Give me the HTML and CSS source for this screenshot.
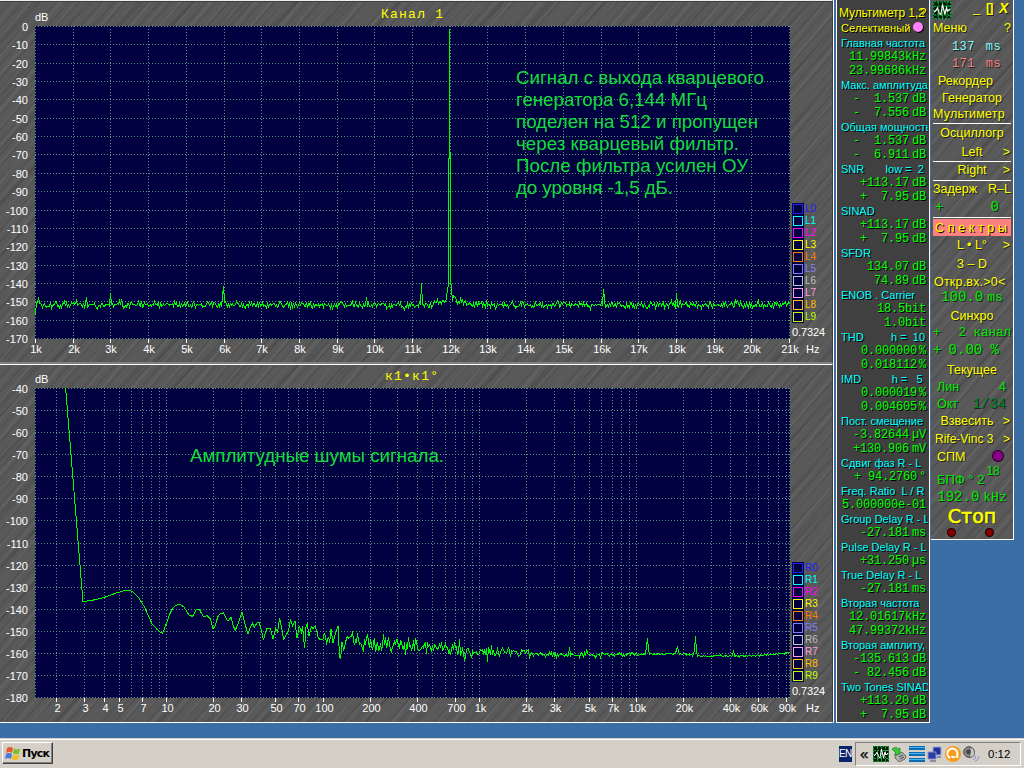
FILE: index.html
```html
<!DOCTYPE html>
<html lang="ru">
<head>
	<meta charset="UTF-8">
	<title>Анализатор спектра</title>
	<link rel="stylesheet" href="styles.css">
</head>
<body>
	<div id="desk">
		<div id="charts">
			<div class="chart metal first">
				<svg id="plot1" class="plot" width="790" height="362"></svg>
				<div class="side">
					<ul class="legend" id="leg1"></ul>
					<p class="res">0.7324</p>
					<p class="hz">Hz</p>
				</div>
			</div>
			<div class="chart metal second">
				<svg id="plot2" class="plot" width="790" height="357"></svg>
				<div class="side">
					<ul class="legend" id="leg2"></ul>
					<p class="res">0.7324</p>
					<p class="hz">Hz</p>
				</div>
			</div>
		</div>
		<div id="meter">
			<h2>Мультиметр 1,2<span>?</span></h2>
			<h3>Селективный<i class="lamp"></i></h3>
			<div id="rows"></div>
		</div>
		<div id="menu" class="metal">
			<div class="top">
				<svg class="logo" width="18" height="18" viewBox="0 0 16 16"><use href="#wave"/></svg>
				<span class="btns"><b class="min">_</b><b class="max">[]</b><b class="close">X</b></span>
			</div>
			<div class="r h20"><span>Меню</span><span>?</span></div>
			<div class="r m cyan h17"><span>137</span><span>ms</span></div>
			<div class="r m pink h17"><span>171</span><span>ms</span></div>
			<div class="r c h17 in"><span>Рекордер</span></div>
			<div class="r c h17"><span>Генератор</span></div>
			<div class="r h17 line wide"><span>Мультиметр</span></div>
			<div class="r c h20"><span>Осциллогр</span></div>
			<div class="r h18 line arrow"><span>Left</span><em>&gt;</em></div>
			<div class="r h19 line arrow"><span>Right</span><em>&gt;</em></div>
			<div class="r h18"><span>Задерж</span><span>R–L</span></div>
			<div class="r g mono h19 line zero"><span>+</span><span>0</span></div>
			<div class="r hot"><span>С</span><span>п</span><span>е</span><span>к</span><span>т</span><span>р</span><span>ы</span></div>
			<div class="r h20 arrow"><span>L • L°</span><em>&gt;</em></div>
			<div class="r c h18"><span>3 – D</span></div>
			<div class="r h17 tight"><span>Откр.вх.&gt;0&lt;</span></div>
			<div class="r g mono c h15"><span>100.0<small>ms</small></span></div>
			<div class="r c h22"><span>Синхро</span></div>
			<div class="r g mono h12 chan"><span>+</span><span>2 канал</span></div>
			<div class="r g mono h22 perc"><span>+</span><span>0.00 %</span></div>
			<div class="r c h17"><span>Текущее</span></div>
			<div class="r g h17 pad"><span>Лин</span><span>4</span></div>
			<div class="r g h17 pad"><span>Окт</span><span class="dark">1/34</span></div>
			<div class="r h18 arrow in"><span>Взвесить</span><em>&gt;</em></div>
			<div class="r h17 arrow left"><span>Rife-Vinc 3</span><em>&gt;</em></div>
			<div class="r h20 pad"><span>СПМ</span><i class="lamp violet"></i></div>
			<div class="r g h25 pad bpf"><span>БПФ ° 2<sup>18</sup></span></div>
			<div class="r g mono c h11 rate"><span>192.0<small>kHz</small></span></div>
			<div class="r stop"><span>Стоп</span></div>
			<div class="leds"><i></i><i></i></div>
		</div>
	</div>
	<div id="taskbar">
		<div class="start">
			<svg width="16" height="16" viewBox="0 0 16 16">
				<path d="M2 3Q5 1 8 3L7 8Q4 6 1 8Z" fill="#e8582c"/>
				<path d="M9 3.500Q12 5 15 3.500L14 8.500Q11 10 8 8.500Z" fill="#7cbf2c"/>
				<path d="M1 9Q4 7 7 9L6 14Q3 12 0 14Z" fill="#4878dc"/>
				<path d="M8 9.500Q11 11 14 9.500L13 14.500Q10 16 7 14.500Z" fill="#f0c020"/>
			</svg>
			<b>Пуск</b>
		</div>
		<div class="lang"><span>EN</span></div>
		<div class="tray">
			<span class="more">«</span>
			<svg width="16" height="16" viewBox="0 0 16 16">
				<g id="wave">
					<path d="M0 0H16V16H0Z" fill="#001800"/>
					<path d="M.5.500H15.500V15.500H.500ZM4.500 1V15M8.500 1V15M12.500 1V15M1 4.500H15M1 8.500H15M1 12.500H15" fill="none" stroke="#18a040" stroke-dasharray="2 1"/>
					<path d="M1 10L3 8L4 6L5.500 11L7 12L8.500 3L10.500 12L12 6L13 9L15 7" fill="none" stroke="#fff"/>
				</g>
			</svg>
			<svg width="16" height="16" viewBox="0 0 16 16">
				<path d="M4 10L11 6L15 10L14 13L8 16L4 12Z" fill="#b0b4b0" stroke="#555" stroke-width=".800"/>
				<path d="M8 11L12 9M9 13L13 11" stroke="#444"/>
				<path d="M1 3L5 1L7 3L9 2L9 8L3 9L5 7Z" fill="#38c838" stroke="#188018" stroke-width=".700"/>
			</svg>
			<svg width="16" height="16" viewBox="0 0 16 16">
				<path d="M0 0H16V4H0ZM0 6H16V10H0ZM0 12H16V16H0Z" fill="#0c6cb8"/>
				<path d="M0 1.500H16M0 7.500H16M0 13.500H16" stroke="#48b4f0"/>
			</svg>
			<svg width="16" height="16" viewBox="0 0 16 16">
				<path d="M6 1H14V9H6Z" fill="#20309c" stroke="#a0a8d0"/>
				<path d="M1 6H9V13H1Z" fill="#2c3ca8" stroke="#8890c0"/>
				<path d="M3 15H9M10 11H14" stroke="#707898" stroke-width="1.500"/>
			</svg>
			<svg width="16" height="16" viewBox="0 0 16 16">
				<circle cx="8" cy="8" r="8" fill="#f89c1c"/>
				<path d="M5 12A5 5 0 1 1 12.300 8.500V12" fill="none" stroke="#fff" stroke-width="2"/>
				<path d="M10.500 10.500A2.500 2.500 0 0 1 6.500 10" fill="none" stroke="#fff" stroke-width="1.800"/>
			</svg>
			<svg width="17" height="16" viewBox="0 0 17 16">
				<circle cx="6" cy="6" r="5.300" fill="#8c8c8c" stroke="#444"/>
				<path d="M7 1Q13 3 11 10L7 12Z" fill="#c8c8c8" stroke="#555" stroke-width=".700"/>
				<circle cx="5.500" cy="6" r="2.400" fill="#444"/>
				<path d="M10 14Q13 13 13 10M12 15.500Q16 14 16 10" fill="none" stroke="#8890d8"/>
			</svg>
			<span class="clock">0:12</span>
		</div>
	</div>
	<script src="script.js"></script>
</body>
</html>
```

FILE: styles.css
```css
*,*:before{box-sizing:border-box;}
body,ul,p,h2,h3{padding:0;margin:0;}
li{list-style:none;}
body{width:1024px;height:768px;overflow:hidden;background:#3a6ea5;font-family:"Liberation Sans",Arial,sans-serif;font-size:11px;display:flex;flex-direction:column;}
#desk{height:738px;display:flex;align-items:flex-start;}
.metal{background:
	repeating-linear-gradient(132deg,rgba(0,0,0,.1) 0 1px,transparent 2px 7px,rgba(0,0,0,.07) 8px 9px,transparent 10px 17px),
	repeating-linear-gradient(130deg,rgba(255,255,255,.05) 0 2px,transparent 3px 11px,rgba(255,255,255,.04) 12px 13px,transparent 14px 23px),
	repeating-linear-gradient(134deg,transparent 0 26px,rgba(0,0,0,.08) 28px 30px,transparent 31px 37px),#595959;}

#charts{width:834px;height:723px;border-right:1px solid #fff;}
.chart{display:flex;border-right:1px solid #404040;}
.first{height:364px;border-top:1px solid #e8f0e8;border-bottom:2px solid #808080;box-shadow:inset 0 1px #404040;}
.second{height:359px;border-top:1px solid #fff;border-bottom:1px solid #fff;}
.plot{display:block;overflow:visible;flex:none;}
.plot text{font-size:11px;fill:#fff;}
.plot .title{font-family:"Liberation Mono","Courier New",monospace;font-size:13px;fill:#ff0;}
.plot .note{font-size:18.700px;fill:#14dc3c;}
.plot line,.plot polyline{shape-rendering:crispEdges;fill:none;}
.grid{stroke:#5c9480;stroke-dasharray:1 2;}
.tick{stroke:#fff;}
.trace{stroke:#0f0;}
.side{width:42px;padding-left:2px;color:#fff;}
.first .side{padding-top:202px;}
.second .side{padding-top:197px;}
.legend{width:38px;}
.legend li{height:12px;display:flex;align-items:center;line-height:12px;font-size:10px;}
.legend i{width:12px;height:12px;background:#000040;padding:1px;margin-right:1px;}
.legend i:before{content:"";display:block;width:10px;height:10px;border:1px solid;}
.res{margin-top:3px;line-height:12px;font-size:11px;letter-spacing:-.1px;}
.hz{margin-top:5px;line-height:13px;padding-left:14px;}

#meter{width:94px;height:723px;margin-left:2px;background:#404040;border:1px solid #fff;border-width:0 1px 1px;padding:5px 1px 0 3px;text-shadow:1px 1px #000;overflow:hidden;}
#meter h2{height:16px;line-height:16px;font-size:12px;font-weight:normal;color:#ff0;white-space:nowrap;display:flex;letter-spacing:-.1px;margin-left:-1px;}
#meter h2 span{margin-left:-5px;}
#meter h3{height:15px;line-height:15px;font-size:11px;font-weight:normal;color:#ff0;padding-left:1px;display:flex;letter-spacing:.1px;}
.lamp{width:10px;height:10px;border-radius:5px;background:#ff80ff;margin:1px 0 0 3px;box-shadow:1px 1px #000;}
.lab{height:14px;line-height:14px;color:#0ff;padding-left:1px;overflow:hidden;font-size:11px;white-space:pre;}
.val{height:14px;line-height:15px;color:#0f0;font-family:"Liberation Mono","Courier New",monospace;font-size:12px;letter-spacing:-.2px;white-space:pre;display:flex;justify-content:flex-end;padding-right:2px;}
.val .u2{margin-left:3px;}
.val .u1{margin-left:2px;}

#menu{width:83px;height:540px;border-right:1px solid #fff;border-bottom:1px solid #fff;margin-left:1px;color:#ff0;font-size:12.500px;text-shadow:1px 1px #222;padding:0 2px;}
.top{height:19px;padding-top:1px;display:flex;justify-content:space-between;}
.btns{display:flex;line-height:15px;}
.btns .min{width:13px;font-weight:normal;}
.btns .max{width:13px;letter-spacing:-1px;}
.btns .close{font-style:italic;font-size:14px;width:12px;}
.r{display:flex;justify-content:space-between;align-items:center;white-space:nowrap;line-height:14px;padding-bottom:2px;}
.r.c{justify-content:center;}
.c.in{padding-right:13px;}
.h11{height:11px;}.h12{height:12px;}.h15{height:15px;}.h17{height:17px;}.h18{height:18px;}.h19{height:19px;}.h20{height:20px;}.h22{height:22px;}.h25{height:25px;}
.line{border-bottom:1px solid #fff;}
.wide{letter-spacing:.2px;}
.m{font-family:"Liberation Mono","Courier New",monospace;font-size:12px;justify-content:flex-end;}
.m span+span{margin:0 10px 0 11px;}
.m span{letter-spacing:.4px;}
.cyan{color:#80ffff;}
.pink{color:#ff8080;}
.g{color:#00e800;}
.dark{color:#008020;}
.mono,.dark{font-family:"Liberation Mono","Courier New",monospace;font-size:14px;}
.mono small{font-size:13px;margin-left:4px;}
.arrow{position:relative;justify-content:center;}
.arrow em{position:absolute;right:1px;font-style:normal;}
.r.arrow.in{padding-right:10px;}
.r.arrow.left{justify-content:flex-start;padding-left:2px;font-size:12px;}
.r.zero{padding:0 12px 2px 2px;}
.r.hot{height:17px;background:#ff8080;padding:0 4px 0 2px;margin-top:1px;text-shadow:1px 1px #000;}
.tight{padding-left:1px;letter-spacing:.2px;}
.r.chan{font-size:12.500px;}
.r.perc{padding-right:12px;}
.r.pad{padding:0 5px 2px 4px;}
.lamp.violet{background:#808;box-shadow:0 0 0 1px #200020;margin:-3px 3px 0 0;}
sup{font-size:12px;position:relative;top:-3px;margin-left:2px;line-height:0;}
.bpf{font-size:13px;}
.stop{height:25px;justify-content:center!important;font-size:19px;font-family:"DejaVu Sans",sans-serif;-webkit-text-stroke:.6px #ff0;}
.leds{display:flex;justify-content:space-between;padding:0 18px 0 15px;}
.leds i{width:7px;height:7px;border-radius:4px;background:#800000;box-shadow:0 0 0 1px #200000;}

#taskbar{height:30px;background:#d4d0c8;box-shadow:inset 0 1px #d4d0c8,inset 0 2px #fff;display:flex;align-items:flex-start;padding:4px 1px 0 2px;}
.start{width:51px;height:22px;border:1px solid;border-color:#fff #404040 #404040 #fff;box-shadow:inset -1px -1px #808080;display:flex;align-items:center;padding-left:2px;}
.start b{font-family:"DejaVu Sans",sans-serif;font-size:11px;letter-spacing:-.8px;margin-left:1px;}
.lang{width:13px;height:16px;margin:4px 0 0 786px;background:#0a246a;color:#fff;line-height:16px;font-size:10px;letter-spacing:-.7px;}
.tray{margin-left:3px;width:166px;height:24px;border:1px solid;border-color:#808080 #fff #fff #808080;display:flex;align-items:center;gap:2px;padding-left:4px;}
.more{font-size:15px;width:11px;line-height:12px;-webkit-text-stroke:.3px #000;}
.clock{margin-left:6px;font-size:11.500px;}
```

FILE: script.js
```js
var NS='http://www.w3.org/2000/svg';
function add(svg,tag,attrs,txt){
	var el=document.createElementNS(NS,tag);
	for(var k in attrs){
		el.setAttribute(k,attrs[k]);
	}
	if(txt!==undefined){
		el.textContent=txt;
	}
	svg.appendChild(el);
	return el;
}
function line(svg,cls,x1,y1,x2,y2){
	add(svg,'line',{'class':cls,x1:x1,y1:y1,x2:x2,y2:y2});
}
// fixed seed, the noise is the same on every load
var seed=77;
function rnd(){
	seed=(seed*16807)%2147483647;
	return seed/2147483647+((seed>>5)%1000)/1000-1;
}
function yAxis(svg,from,to,top,h){
	var n=(from-to)/10;
	for(var i=0;i<=n;i++){
		var y=Math.round(top+h*i/n)+.5;
		line(svg,'grid',35,y,790,y);
		add(svg,'text',{x:28,y:y+4,'text-anchor':'end'},from-i*10);
	}
}
function note(svg,x,y,rows){
	for(var i=0;i<rows.length;i++){
		add(svg,'text',{'class':'note',x:x,y:y+i*22,textLength:rows[i][1]},rows[i][0]);
	}
}
// linear frequency axis, 1k..21k
function chart1(){
	var svg=document.getElementById('plot1');
	add(svg,'rect',{x:35,y:25,width:755,height:313,fill:'#000040'});
	yAxis(svg,0,-170,25,312);
	for(var i=0;i<=20;i++){
		var x=Math.round(35+i*37.7)+.5;
		line(svg,'grid',Math.min(x,789.5),25,Math.min(x,789.5),338);
		line(svg,'tick',x,338,x,342);
		add(svg,'text',{x:x+.5,y:352,'text-anchor':'middle'},(i+1)+'k');
	}
	add(svg,'text',{x:35,y:20},'dB');
	add(svg,'text',{'class':'title',x:381,y:17,textLength:62},'Канал 1');
	var peaks={38:296,110:292,121:298,223:285,222:296,421:282,603:288,604:298,676:292,735:298,86:296,366:296};
	var pts=['35.5,314'];
	for(var x=36;x<790;x++){
		var y=304+rnd()*4.8;
		var d=Math.abs(x-450);
		if(d<20){
			y-=9*Math.pow(1-d/20,1.500);
		}
		if(peaks[x]){
			y=peaks[x];
		}
		if(x==447||x==451){
			y=287;
		}
		if(x==448){
			pts.push('448.5,285','448.5,157','449.5,157','449.5,28','449.5,151','450.5,151','450.5,278');
			x=450;
			continue;
		}
		pts.push((x+.5)+','+y.toFixed(1));
	}
	add(svg,'polyline',{'class':'trace',points:pts.join(' ')});
	note(svg,516,83,[
		['Сигнал с выхода кварцевого',248],
		['генератора 6,144 МГц',191],
		['поделен на 512 и пропущен',242],
		['через кварцевый фильтр.',223],
		['После фильтра усилен ОУ',232],
		['до уровня -1,5 дБ.',157]
	]);
}
// log frequency axis, 1.45..90k
function lx(f){
	return 166.4+156.7*Math.log(f/10)/Math.LN10;
}
function chart2(){
	var svg=document.getElementById('plot2');
	var o=365;
	add(svg,'rect',{x:35,y:388-o,width:755,height:310,fill:'#000040'});
	yAxis(svg,-40,-180,388-o,309);
	line(svg,'grid',35.5,388-o,35.5,698-o);
	line(svg,'grid',789.5,388-o,789.5,698-o);
	var show=[2,3,4,5,7,10,20,30,50,70,100,200,400,700,1000,2000,3000,5000,7000,10000,20000,40000,60000,90000];
	for(var dec=1;dec<=10000;dec*=10){
		for(var m=1;m<10;m++){
			var f=dec*m;
			if(f<2){
				continue;
			}
			var x=Math.floor(lx(f))+.5;
			line(svg,'grid',x,388-o,x,698-o);
			if(show.indexOf(f)>=0){
				line(svg,'tick',x,698-o,x,702-o);
				add(svg,'text',{x:x+1,y:712-o,'text-anchor':'middle'},f<1000?f:f/1000+'k');
			}
		}
	}
	add(svg,'text',{x:35,y:383-o},'dB');
	add(svg,'text',{'class':'title',x:385,y:380-o,textLength:53},'к1•к1°');
	// low end of the curve, 3 units per pixel
	var low=[196,24,248,666,255,664,280,660,310,653,330,646,345,640,358,636,372,632,385,631,395,634,413,650,432,680,455,731,470,748,480,756,487,760,492,748,500,725,507,705,517,685,526,677,535,673,543,675,550,680,558,692,566,706,577,709,582,700,587,689,597,688,608,708,614,711,620,706,631,718,638,748,646,735,652,712,657,703,670,699,675,709,681,723,686,720,692,712,699,738,705,751,714,730,725,697,733,728,743,762,750,742,756,729,762,742,770,728,777,728,784,755,790,780,795,760,800,745,810,745,818,778,826,745,832,757,838,715,844,742,850,778,858,764,864,755,871,718,877,737,884,722,890,775,897,738,903,757,907,738,913,805,917,740,921,730,926,768,933,740,938,747,941,740,945,740,950,757,954,774,958,778,968,777,973,760,979,788,985,770,988,790,992,748,998,788,1004,765,1013,738,1018,830,1021,838,1025,785,1030,812,1035,790,1040,770,1045,775,1050,770];
	var pts=[];
	for(var i=0;i<low.length;i+=2){
		pts.push((low[i]/3+.3).toFixed(1)+','+(low[i+1]/3+380-o).toFixed(1));
	}
	// [x, level, noise] above it
	var env=[[350,641,11],[370,645,11],[400,646,10],[415,645,9],[440,648,6],[460,652,6],[480,653,6],[500,652,5],[535,654,4],[560,655,3],[600,655,2.500],[640,654,2],[645,654,1],[680,654,1],[700,656,1],[750,656,1],[790,653,1]];
	var peaks={408:637,454:642,459:639,464:661,487:662,491:645,508:647,569:647,586:649,646:646,647:638,648:650,676:650,677:646,678:652,694:650,695:636,696:651,733:650};
	var k=0;
	for(var x=351;x<790;x++){
		while(x>env[k+1][0]){
			k++;
		}
		var a=env[k],b=env[k+1],t=(x-a[0])/(b[0]-a[0]);
		var y=a[1]+(b[1]-a[1])*t+rnd()*(a[2]+(b[2]-a[2])*t)*1.100;
		if(peaks[x]){
			y=peaks[x];
		}
		pts.push((x+.5)+','+(y-o).toFixed(1));
	}
	add(svg,'polyline',{'class':'trace',points:pts.join(' ')});
	note(svg,190,462-o,[['Амплитудные шумы сигнала.',254]]);
}
function legend(id,ch){
	var colors=['#2020ff','#0ff','#f0f','#ff0','#ff8000','#8080ff','#c0c0c0','#ffa0e0','#ffc000','#c0ff00'];
	var s='';
	for(var i=0;i<colors.length;i++){
		s+='<li style="color:'+colors[i]+'"><i></i>'+ch+i+'</li>';
	}
	document.getElementById(id).innerHTML=s;
}
// label, then value|unit lines
var meter=[
	['Главная частота','11.99843|kHz','23.99686|kHz'],
	['Макс. амплитуда','-  1.537|dB','-  7.556|dB'],
	['Общая мощность','-  1.537|dB','-  6.911|dB'],
	['SNR       low =  2','+113.17|dB','+  7.95|dB'],
	['SINAD','+113.17|dB','+  7.95|dB'],
	['SFDR','134.07|dB','74.89|dB'],
	['ENOB . Carrier','18.5|bit','1.0|bit'],
	['THD         h =  10','0.000000|%','0.018112|%'],
	['IMD          h =   5','0.000019|%','0.004605|%'],
	['Пост. смещение','-3.82644|µV','+130.906|mV'],
	['Сдвиг фаз R - L','+ 94.2760|°'],
	['Freq. Ratio  L / R','5.000000e-01|'],
	['Group Delay R - L','-27.181|ms'],
	['Pulse Delay R - L','+31.250|µs'],
	['True Delay R - L','-27.181|ms'],
	['Вторая частота','12.01617|kHz','47.99372|kHz'],
	['Вторая амплиту,','-135.613|dB','- 82.456|dB'],
	['Two Tones SINAD','+113.20|dB','+  7.95|dB']
];
function fillMeter(){
	var s='';
	for(var i=0;i<meter.length;i++){
		s+='<p class="lab">'+meter[i][0]+'</p>';
		for(var j=1;j<meter[i].length;j++){
			var v=meter[i][j].split('|');
			s+='<p class="val"><span>'+v[0]+'</span><span class="u'+v[1].length+'">'+v[1]+'</span></p>';
		}
	}
	document.getElementById('rows').innerHTML=s;
}
chart1();
chart2();
legend('leg1','L');
legend('leg2','R');
fillMeter();
```
